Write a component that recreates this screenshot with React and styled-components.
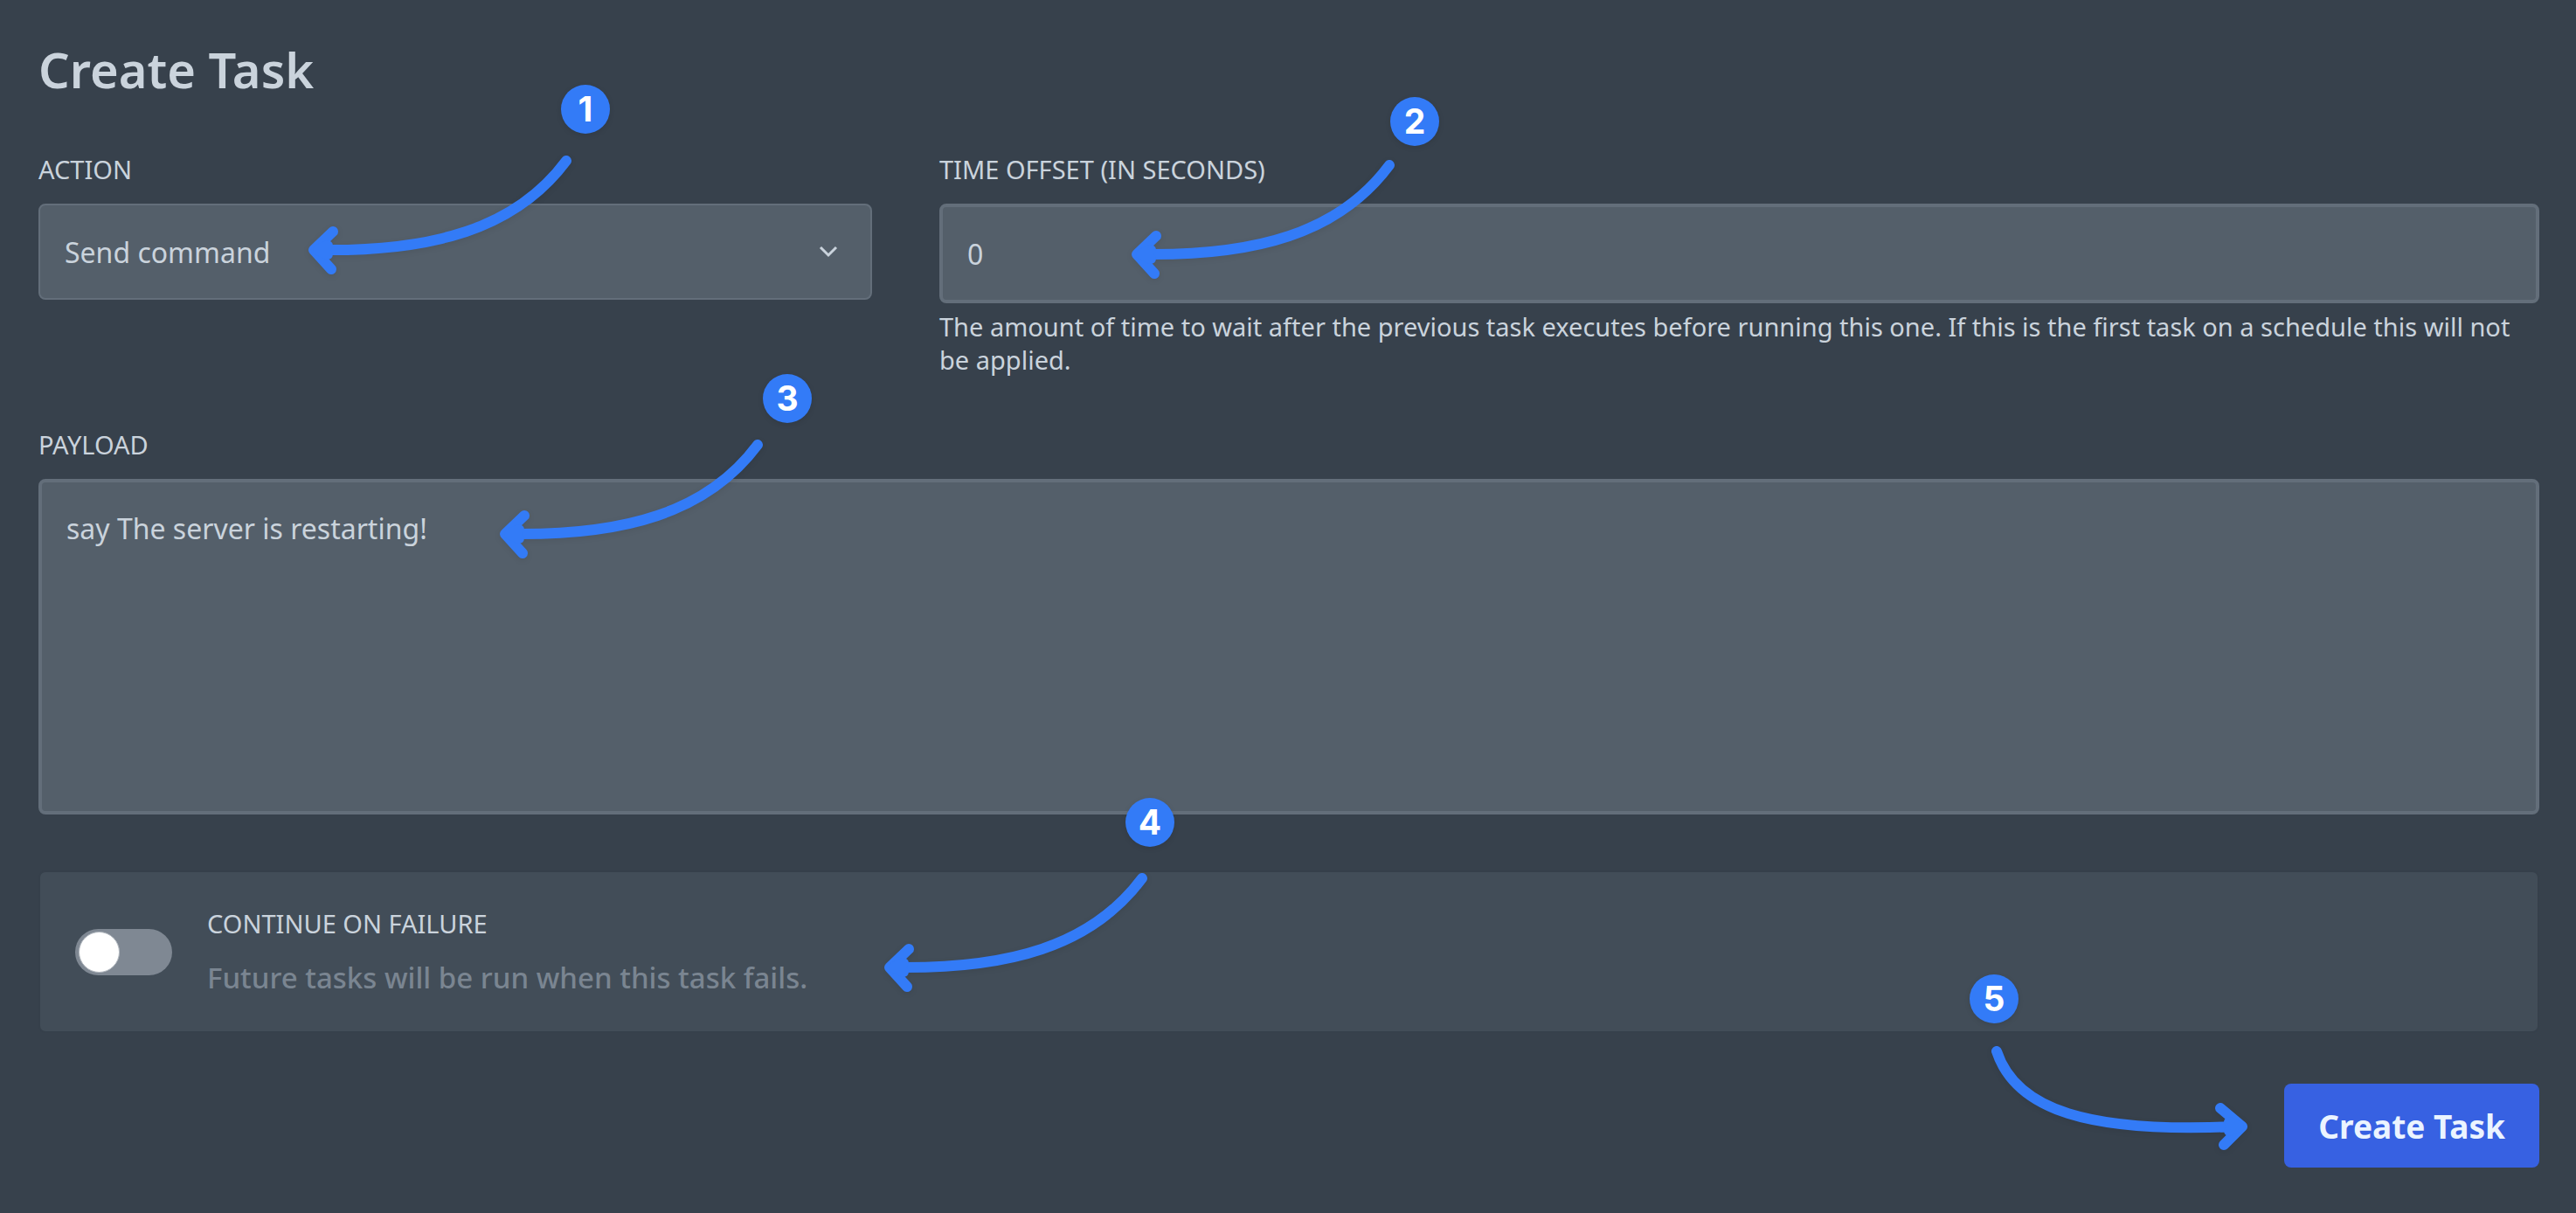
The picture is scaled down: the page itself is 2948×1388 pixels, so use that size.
import React, { useState } from "react";
import styled, { createGlobalStyle } from "styled-components";

const color = {
  page: "#37414c",
  panel: "#424d58",
  field: "#545f6a",
  fieldBorder: "#636e7a",
  text: "#cad3dc",
  muted: "#7a8591",
  track: "#7f8893",
  primary: "#3761e2",
  primaryText: "#ebf4ff",
  callout: "#337bf7",
};

const GlobalStyle = createGlobalStyle`
  *, *::before, *::after { box-sizing: border-box; }
  body {
    margin: 0;
    background: ${color.page};
    color: ${color.text};
    font-family: "Noto Sans", "Open Sans", sans-serif;
  }
`;

const Form = styled.form`
  display: flex;
  flex-direction: column;
  min-height: 100vh;
  padding: 43px 42px 52px 44px;
`;

const Title = styled.h2`
  margin: 0 0 58px;
  font-size: 56px;
  line-height: 72px;
  font-weight: 600;
`;

const FieldRow = styled.div`
  display: flex;
  gap: 77px;
  margin-bottom: 57px;
`;

const Field = styled.div`
  position: relative;
  display: flex;
  flex-direction: column;
  flex: ${(p) => p.$flex || "0 0 auto"};
  min-width: 0;
`;

const Label = styled.label`
  margin-bottom: 18px;
  font-size: 29px;
  line-height: 42px;
  text-transform: uppercase;
`;

const SelectWrap = styled.div`
  display: grid;
  align-items: center;

  & > * { grid-area: 1 / 1; }
`;

const Select = styled.select`
  appearance: none;
  width: 100%;
  height: 110px;
  padding: 0 96px 0 28px;
  border: 2px solid ${color.fieldBorder};
  border-radius: 8px;
  background: ${color.field};
  color: inherit;
  font: inherit;
  font-size: 32px;
`;

const Chevron = styled.svg`
  justify-self: end;
  width: 24px;
  height: 16px;
  margin-right: 38px;
  pointer-events: none;
`;

const TextInput = styled.input`
  width: 100%;
  height: 114px;
  padding: 0 28px;
  border: 4px solid ${color.fieldBorder};
  border-radius: 8px;
  background: ${color.field};
  color: inherit;
  font: inherit;
  font-size: 32px;
`;

const TextArea = styled.textarea`
  display: block;
  width: 100%;
  height: 384px;
  padding: 30px 28px;
  border: 4px solid ${color.fieldBorder};
  border-radius: 8px;
  background: ${color.field};
  color: inherit;
  font: inherit;
  font-size: 32px;
  line-height: 46px;
  resize: none;
`;

const Hint = styled.p`
  margin: 8px 0 0;
  font-size: 29px;
  line-height: 38px;
`;

const SwitchPanel = styled.div`
  position: relative;
  display: flex;
  align-items: center;
  gap: 40px;
  margin: 64px 0 58px;
  padding: 38px 40px;
  border: 2px solid #36404b;
  border-radius: 8px;
  background: ${color.panel};
`;

const Switch = styled.input`
  appearance: none;
  flex: none;
  display: flex;
  align-items: center;
  width: 111px;
  height: 53px;
  margin: 0;
  padding: 0 4px;
  border-radius: 27px;
  background: ${color.track};
  cursor: pointer;

  &::before {
    content: "";
    width: 47px;
    height: 47px;
    border: 1px solid #b4bac1;
    border-radius: 50%;
    background: #fff;
  }

  &:checked { justify-content: flex-end; background: ${color.primary}; }
`;

const SwitchText = styled.div`
  display: flex;
  flex-direction: column;
`;

const SwitchHint = styled.p`
  margin: 0;
  color: ${color.muted};
  font-size: 33px;
  line-height: 46px;
  font-weight: 500;
`;

const Actions = styled.div`
  position: relative;
  display: flex;
  justify-content: flex-end;
`;

const SubmitButton = styled.button`
  height: 96px;
  padding: 0 39px;
  border: 0;
  border-radius: 8px;
  background: ${color.primary};
  color: ${color.primaryText};
  font: inherit;
  font-size: 37px;
  font-weight: 700;
  cursor: pointer;
`;

/* Numbered callouts lie over the form, anchored to the part they explain. */
const Callout = styled.div`
  position: absolute;
  top: ${(p) => p.$top}px;
  ${(p) => (p.$right !== undefined ? `right: ${p.$right}px;` : `left: ${p.$left}px;`)}
  width: 360px;
  height: 200px;
  pointer-events: none;
  z-index: 1;
`;

const Badge = styled.span`
  position: absolute;
  top: 0;
  left: ${(p) => p.$x}px;
  display: flex;
  align-items: center;
  justify-content: center;
  width: 56px;
  height: 56px;
  border-radius: 50%;
  background: ${color.callout};
  box-shadow: 0 2px 6px rgba(0, 0, 0, 0.1);
  color: #fff;
  font-family: Inter, sans-serif;
  font-size: 39px;
  font-weight: 700;
  line-height: 56px;
`;

const Arrow = styled.svg`
  position: absolute;
  top: ${(p) => p.$y}px;
  left: 0;
  width: 310px;
  height: 144px;
  fill: none;
  stroke: ${color.callout};
  stroke-linecap: round;
  stroke-linejoin: round;
  filter: drop-shadow(0 2px 3px rgba(0, 0, 0, 0.08));
`;

function ArrowLeft({ y }) {
  return (
    <Arrow $y={y} viewBox="0 0 310 144" aria-hidden="true">
      <path strokeWidth="12" d="M298 10C240 88 145 114 14 112" />
      <path strokeWidth="12" d="M31 91L9 112L29 134" />
      <path strokeWidth="12" d="M25 107L14 112L25 117" />
    </Arrow>
  );
}

function ArrowRight({ y }) {
  return (
    <Arrow $y={y} viewBox="0 0 310 144" aria-hidden="true">
      <path strokeWidth="12" d="M13 10C35 77 118 104 288 96" />
      <path strokeWidth="12" d="M269 75L294 96L273 117" />
      <path strokeWidth="12" d="M279 91L290 96L279 101" />
    </Arrow>
  );
}

export default function App() {
  const [action, setAction] = useState("command");
  const [offset, setOffset] = useState("0");
  const [payload, setPayload] = useState("say The server is restarting!");
  const [keepGoing, setKeepGoing] = useState(false);

  return (
    <>
      <GlobalStyle />
      <Form onSubmit={(e) => e.preventDefault()}>
        <Title>Create Task</Title>

        <FieldRow>
          <Field $flex="0 0 calc(100% / 3)">
            <Label htmlFor="action">Action</Label>
            <SelectWrap>
              <Select id="action" value={action} onChange={(e) => setAction(e.target.value)}>
                <option value="command">Send command</option>
                <option value="power">Send power action</option>
                <option value="backup">Create backup</option>
              </Select>
              <Chevron viewBox="0 0 24 16" aria-hidden="true">
                <path d="M3 3L12 12L21 3" fill="none" stroke="currentColor" strokeWidth="3" />
              </Chevron>
            </SelectWrap>
            <Callout $left={306} $top={-76}>
              <Badge $x={292}>1</Badge>
              <ArrowLeft y={77} />
            </Callout>
          </Field>

          <Field $flex="1 1 0">
            <Label htmlFor="offset">Time offset (in seconds)</Label>
            <TextInput
              id="offset"
              inputMode="numeric"
              value={offset}
              onChange={(e) => setOffset(e.target.value)}
            />
            <Hint>
              The amount of time to wait after the previous task executes before running this one. If
              this is the first task on a schedule this will not be applied.
            </Hint>
            <Callout $left={217} $top={-62}>
              <Badge $x={299}>2</Badge>
              <ArrowLeft y={68} />
            </Callout>
          </Field>
        </FieldRow>

        <Field>
          <Label htmlFor="payload">Payload</Label>
          <TextArea id="payload" value={payload} onChange={(e) => setPayload(e.target.value)} />
          <Callout $left={525} $top={-60}>
            <Badge $x={304}>3</Badge>
            <ArrowLeft y={71} />
          </Callout>
        </Field>

        <SwitchPanel>
          <Switch
            id="continue"
            type="checkbox"
            role="switch"
            checked={keepGoing}
            onChange={(e) => setKeepGoing(e.target.checked)}
          />
          <SwitchText>
            <Label htmlFor="continue">Continue on failure</Label>
            <SwitchHint>Future tasks will be run when this task fails.</SwitchHint>
          </SwitchText>
          <Callout $left={963} $top={-85}>
            <Badge $x={279}>4</Badge>
            <ArrowLeft y={82} />
          </Callout>
        </SwitchPanel>

        <Actions>
          <SubmitButton type="submit">Create Task</SubmitButton>
          <Callout $right={274} $top={-125}>
            <Badge $x={-18}>5</Badge>
            <ArrowRight y={78} />
          </Callout>
        </Actions>
      </Form>
    </>
  );
}
